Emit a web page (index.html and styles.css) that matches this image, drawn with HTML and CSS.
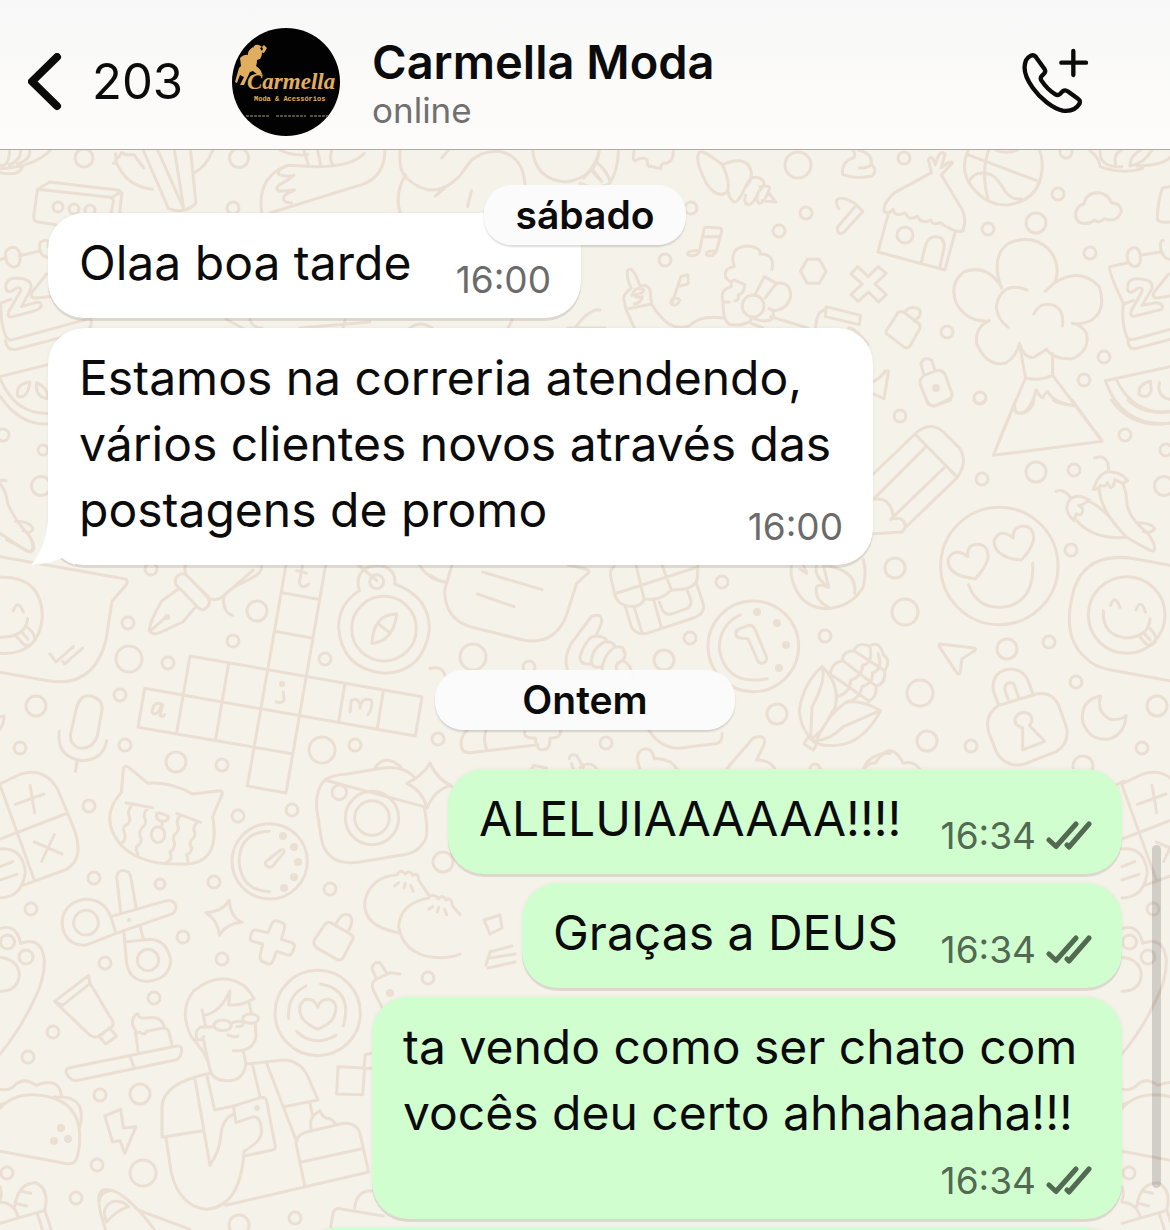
FILE: index.html
```html
<!DOCTYPE html>
<html lang="pt-BR">
<head>
<meta charset="utf-8">
<meta name="viewport" content="width=device-width, initial-scale=1">
<title>Carmella Moda</title>
<link rel="stylesheet" href="styles.css">
</head>
<body>
<div class="app">
  <header class="topbar">
    <button class="back" type="button" aria-label="Voltar">
      <svg width="34" height="58" viewBox="0 0 34 58" aria-hidden="true"><path d="M29 4 4 28.500 29 53" fill="none" stroke="currentColor" stroke-width="8" stroke-linecap="round" stroke-linejoin="round"/></svg>
      <span>203</span>
    </button>
    <svg class="avatar" viewBox="0 0 108 108" role="img" aria-label="Carmella Moda">
      <circle cx="54" cy="54" r="54" fill="#020202"/>
      <g fill="#e0ae5f">
        <path d="M21 20q1-4 6-3l3 2 2-2 3 3-3 5-3-1 2-3-1-2-2 1q4 5 0 11l-3 1q0 4-1 6 5 3 6 8l-4 1-5-4-3 1q-3 6-6 13l-4 0 4-8-4-2-3 8-2-1 4-14 2-2-1-8q4-4 8-3-1-4 5-8z"/>
        <text class="logo-name" x="15" y="61">Carmella</text>
        <text class="logo-sub" x="22" y="73">Moda &amp; Acessórios</text>
      </g>
      <path d="M14 88h24M44 88h30M78 88h18" stroke="#574d42" stroke-width="2" stroke-dasharray="3 1"/>
    </svg>
    <div class="who">
      <h1>Carmella Moda</h1>
      <p>online</p>
    </div>
    <button class="call" type="button" aria-label="Adicionar chamada">
      <svg width="68" height="68" viewBox="-1 9 204 204" fill="none" stroke="currentColor" stroke-width="13" stroke-linecap="round" stroke-linejoin="round" aria-hidden="true"><path d="M156 18V90M120 53H194M42 34C34 26 20 34 14 46C4 70 12 98 34 128C58 162 94 190 124 197C146 200 164 194 175 175C177 169 176 165 171 162L139 139C134 135 128 136 124 139L116 147C112 151 107 151 102 148C86 138 71 123 60 106C57 101 58 97 61 93L68 86C73 81 73 77 69 71L42 34Z"/></svg>
    </button>
  </header>

  <main class="chat">
    <svg class="wallpaper" viewBox="0 150 1170 1080" preserveAspectRatio="xMinYMin slice" aria-hidden="true">
      <defs>
        <!-- doodles that repeat on both edges -->
        <g id="edge">
          <path d="M0 132L62 102Q135 80 174 150L222 266Q256 360 195 390L68 436M0 297L196 222M0 135L102 418M90 136 104 218M46 193 132 162M103 306 186 342M163 284 125 364M0 327Q66 320 76 395 68 472 0 474M0 380 38 365M0 420 50 403" transform="translate(0 740) scale(.33333)"/>
          <path d="M0 566Q50 550 62 610 125 588 133 660 134 720 102 780 60 870 0 942M0 652Q54 658 58 704 54 754 0 754" transform="translate(0 740) scale(.33333)"/>
          <circle cx="7.500" cy="942" r="7"/><circle cx="26" cy="957" r="7"/>
          <path d="M0 388Q30 392 42 378 70 348 108 376 176 350 184 404M0 445Q40 400 112 405 220 414 237 500 244 560 228 600 220 616 190 609L0 574M160 412Q262 400 240 500M0 435 12 430M0 790 132 752M112 762 128 810M134 750 154 810M44 740Q54 668 108 668 150 690 134 750M64 694 92 700M48 730 80 738M0 726Q44 730 54 770M0 680Q8 705 0 720" transform="translate(0 960) scale(.33333)"/>
          <circle cx="7" cy="1173" r="6"/>
        </g>
      </defs>
      <g class="ink">
        <use href="#edge"/><use href="#edge" x="1122"/>

        <!-- top left: bowl, radio, carrots, goose -->
        <g transform="translate(0 140) scale(.38265 .33333)">
          <path d="M0 86Q90 82 134 28M0 98Q48 110 58 82M24 75Q56 60 54 30M45 72Q80 60 78 30M0 76Q24 82 25 30"/>
          <path d="M98 148 130 126 306 150Q320 152 318 164L312 225M98 148 288 172Q298 174 296 186L290 222M98 148 88 230Q88 244 100 246L146 254M290 174 312 158"/>
          <path d="M374 30 440 205Q480 225 512 190L498 30M412 30 480 206M456 30 480 206M398 148Q332 140 304 68L296 70M304 68 302 42M310 52 318 38 328 44 350 44Q366 70 376 84M508 98Q540 80 556 30"/>
          <path d="M684 219Q670 110 752 76L830 80Q920 80 952 40M752 76Q720 92 730 104 752 112 768 106 752 122 728 136 718 146 730 154L770 150Q740 164 740 176 744 190 762 188M705 219 945 134Q1006 110 1006 30M732 30Q760 48 804 44M794 30 806 76M830 30 838 76M870 76Q858 52 868 30"/>
          <path d="M1046 30Q1040 90 1062 114 1132 188 1200 110L1232 60Q1262 32 1306 34 1370 50 1372 140M1060 105Q1030 160 1046 219M1154 54 1174 28M1138 168 1160 146M1232 152 1222 200M1392 30Q1400 120 1480 126 1560 110 1566 30M1545 90 1568 120"/>
          <path d="M0 360 16 352M50 348 106 332M18 330Q40 310 52 340 56 380 36 382 14 376 14 340ZM106 306Q130 290 126 320M104 312Q100 350 128 352M16 448Q10 414 46 414 92 418 78 454L56 500 92 488Q108 482 108 498 104 508 92 512L34 530Q16 534 24 512L54 452Q56 438 40 446 24 464 16 448ZM122 402 84 456Q76 474 92 474L130 470M0 490 28 478M2 490Q2 560 16 590 22 604 36 598L232 536M14 602Q18 632 42 628L228 572Q240 564 238 538"/>
          <path d="M0 710 126 674M0 716Q40 824 126 820M0 768Q52 856 126 852M78 726Q40 732 46 768 72 780 78 726ZM96 728Q90 770 124 776 128 746 96 728ZM0 1020 16 1022M0 1030Q18 1060 20 1090 30 1120 56 1160 90 1200 88 1226 84 1240 68 1232L0 1180M40 1144Q76 1144 86 1164 84 1184 60 1172"/>
        </g>
        <!-- strip between the incoming messages -->
        <path d="M226 319 246 330M250 319Q252 328 262 328M300 328 370 322M345 320 343 328M410 328Q420 320 432 328M508 328 512 320M575 328Q590 308 600 310M568 328H605"/>

        <!-- top right: shell, hut, ball, flower, mountain -->
        <g transform="translate(580 140) scale(.37628 .33333)">
          <path d="M102 30Q102 90 78 132 40 150 0 130M50 38Q44 70 10 114M48 70Q74 96 80 126M34 90 58 124M144 30Q138 64 148 62 162 50 178 58 180 84 186 78L214 86Q216 66 228 70 248 66 248 34"/>
          <path d="M378 74Q322 24 316 38 304 60 336 130 362 176 390 158 402 130 378 74ZM378 74Q440 44 454 90 460 120 440 140 420 190 410 186 396 176 394 156M440 140Q454 100 480 116 500 130 474 156 460 196 446 194 434 190 440 166M478 140Q510 134 502 150 490 190 476 190 466 184 474 156M500 156 520 186 484 182M726 30Q736 52 722 56 694 66 698 104 730 118 776 108 792 92 774 72 778 40 740 30M742 84Q770 84 774 72"/>
          <path d="M688 206Q668 170 706 176 720 184 730 190L752 214 702 276Q684 290 684 262L734 196"/>
          <path d="M934 98 926 60Q934 38 944 74 956 24 970 42L960 84Q984 60 990 68L960 106M934 98 836 158Q804 190 808 214 824 224 832 208 836 230 856 222 866 216 866 222 876 244 896 228 908 254 932 240 936 258 958 248 976 264 978 262 1002 280 1018 272 1028 240 1016 210L962 108M820 218 792 336 970 390 998 272M906 370 920 310Q932 282 960 294 972 310 966 332L956 382"/>
          <path d="M1032 30Q1004 100 1052 154 1090 200 1140 194 1220 180 1228 90 1230 50 1220 30M1030 44 1214 122M1086 30Q1064 100 1086 184M1032 126Q1050 90 1086 102 1104 104 1130 154 1150 182 1172 176M1104 30Q1130 44 1162 30"/>
          <path d="M1354 30Q1380 52 1382 80 1440 104 1494 86 1498 78 1480 78 1550 76 1568 52M1382 30Q1380 84 1440 80M1424 80Q1416 40 1440 30M1462 78Q1500 70 1520 30M1490 30Q1460 50 1462 78"/>
          <path d="M1340 192Q1344 156 1380 158 1406 164 1412 188 1440 190 1438 216 1426 250 1394 236 1376 252 1368 240 1350 256 1328 248 1308 228 1324 202 1330 194 1340 192ZM1568 140 1548 144Q1536 180 1534 238 1540 250 1568 246"/>
          <path d="M318 330 330 266Q332 260 344 262L370 264Q378 264 376 274L362 336M326 290H372M318 332Q284 330 286 344 300 352 312 342ZM362 334Q336 330 336 344 352 354 362 334ZM244 492 268 410 286 404Q290 430 286 432L266 438M262 476Q242 470 242 490 254 504 266 480"/>
          <path d="M144 562 122 508 190 492 186 448Q176 430 160 440 140 372 126 392 124 420 136 444 118 460 116 474L122 508M138 466Q146 436 170 450 170 460 144 466 152 476 166 470 162 490 144 492M190 492Q210 530 236 552 260 568 290 558 320 524 382 534M410 380Q394 320 446 318 484 324 478 342 520 342 510 388M410 380Q380 384 388 414L398 424M438 434 410 420Q400 420 402 440 370 450 380 486H396M438 434Q436 464 420 464 424 482 412 482M380 488Q380 540 396 552 420 560 452 546L456 530M464 466 490 410 522 430 492 474M522 430Q560 424 560 470 550 510 514 512L502 506M456 532Q480 548 506 540 518 530 512 510M506 530 606 564M456 550 486 564"/>
          <ellipse cx="460" cy="498" rx="29" ry="33"/>
          <path d="M604 358H636L654 394 636 430H604L586 394ZM738 380 766 410 792 380 814 400 784 432 814 464 794 486 766 456 740 484 720 464 750 432 720 402ZM654 500 746 526 742 554 652 530ZM626 562Q630 514 646 512L658 502M714 564Q730 562 766 614"/>
          <path d="M814 572 846 516Q854 512 862 518L902 552Q906 560 902 568L876 620Q870 626 862 622L818 584Q810 578 814 572ZM862 516Q880 494 902 508 912 524 888 544M908 714Q900 724 906 738L924 788Q934 800 944 798L982 776Q992 770 988 760L970 702Q960 688 948 692L914 706ZM914 704 906 672Q912 648 934 660L944 692M780 724Q798 716 812 692L820 694 808 776 780 762"/>
          <path d="M1120 444Q1090 350 1138 310 1200 280 1244 326 1280 370 1262 428L1236 454M1120 440Q1080 370 1020 396 980 430 1000 490 1030 550 1088 542M1262 428Q1330 380 1380 440 1400 510 1360 540 1330 556 1308 550M1188 450Q1120 420 1106 500 1110 540 1138 562M1206 522Q1220 486 1254 494 1288 506 1282 558M1088 542Q1050 560 1054 610 1080 680 1130 670 1160 650 1168 610 1180 656 1206 652L1240 628Q1260 660 1310 656 1356 630 1346 580 1334 554 1308 550M1168 612 1184 714Q1220 724 1256 706L1256 640M1184 714 1114 900M1256 706 1386 900M1152 796Q1150 824 1176 818 1200 806 1212 750 1230 784 1232 768L1242 754Q1260 790 1316 798"/>
          <path d="M1456 368 1408 380Q1402 390 1444 490 1438 550 1454 592 1460 602 1472 598L1568 568M1456 600Q1458 630 1476 626L1568 598M1490 346 1542 336M1458 332Q1480 310 1488 340 1494 378 1474 380 1454 376 1454 346ZM1550 302Q1540 300 1544 330 1550 356 1568 358M1456 452Q1450 414 1486 416 1530 420 1518 450L1494 496 1530 488Q1554 490 1546 508L1476 528Q1458 532 1466 510L1494 454Q1496 438 1480 446 1464 464 1456 452ZM1564 402 1526 456Q1518 474 1534 474L1568 468M1444 492 1470 482"/>
          <path d="M1568 680 1396 722Q1440 862 1568 850M1424 716Q1470 826 1568 816M1516 724Q1482 732 1486 764 1510 780 1518 750ZM1540 728Q1532 770 1568 778"/>
        </g>

        <!-- right: pencil, smileys, chillies, lock, moon -->
        <g transform="translate(860 400) scale(.33333)">
          <path d="M468 0 400 166 726 124 636 0M464 20Q464 48 498 36 520 20 522 0M200 0Q202 20 228 16L272 0M342 0Q358 22 376 0M580 0Q600 16 648 14M754 0Q816 86 930 70M804 0Q850 46 930 34"/>
          <path d="M40 222 165 102Q210 60 250 96L300 146Q324 186 292 232L135 384 126 396 40 401M165 102 292 232M196 142 40 298Q96 290 100 356 138 350 135 384M92 358 256 200"/>
          <circle cx="418" cy="498" r="176"/>
          <path d="M324 470Q318 436 350 433 386 432 384 476 374 506 346 536 262 528 264 478 284 440 324 470ZM460 414Q458 380 490 378 526 382 520 422 514 450 484 480 402 472 402 422 420 382 460 414ZM326 554Q350 624 424 622 524 612 518 490"/>
          <path d="M704 174Q746 160 746 212M700 268Q720 208 756 216 788 220 803 242L788 250 764 238Q762 264 750 262L742 248Q740 262 722 256 712 270 700 268ZM718 268Q720 330 800 412 880 460 882 452 890 440 864 400 800 350 800 300 798 270 788 250M836 368Q878 370 884 386 874 402 850 394M588 274Q612 264 632 294M688 300Q650 278 630 298 606 330 642 362L648 342Q670 350 668 326L656 316Q664 318 688 300ZM648 360Q700 420 798 412M684 302Q720 320 748 350"/>
          <path d="M930 496 824 476Q660 450 634 600 610 720 680 776 700 800 752 810L930 842"/>
          <circle cx="800" cy="645" r="115"/>
          <path d="M730 632Q726 706 798 714 868 710 870 656M752 616Q764 580 780 622M828 630Q842 592 856 636M836 706 856 730Q870 744 886 726 894 710 870 686M854 702 870 720"/>
          <path d="M238 732 344 744Q350 750 338 756L306 776 300 820Q296 826 290 818L238 740ZM416 916 400 872Q394 816 446 808 490 806 504 842L520 884M444 898 434 868Q436 842 460 850L476 892M416 916 530 882Q576 874 596 916L620 984Q628 1030 590 1054L494 1092Q440 1106 410 1058L386 996Q372 944 416 916ZM488 984Q460 974 466 954 480 930 504 940 526 956 508 976L554 1024 488 1050ZM722 888Q660 900 668 966 690 1026 750 1016 796 1000 798 946 780 962 750 958 708 936 722 888ZM10 1108Q26 1086 46 1090 90 1014 130 1090 160 1080 180 1108"/>
        </g>
        <path d="M1114 786 1124 781"/>

        <!-- left middle: speech bubble, pen, compass, crossword, mic -->
        <g transform="translate(0 540) scale(.33333)">
          <path d="M0 50 376 117Q388 122 376 138L336 184 318 300Q280 446 144 422L0 397M0 112Q124 108 127 228 120 346 0 340M0 292Q78 292 83 236M40 212Q54 174 70 216M50 290 72 314Q90 324 104 300 106 280 82 262M66 276 84 298M150 342 168 366 220 320M188 364 194 372 248 324M20 0 90 36Q100 34 98 10L94 0"/>
          <path d="M556 75Q552 96 560 106L630 176Q650 184 668 170L760 90M784 78Q790 100 736 124 670 152 670 180 672 220 698 226M534 106Q552 96 562 108L624 172Q636 196 612 208 602 212 592 200L528 134Q522 116 534 106ZM534 148 486 182Q450 240 448 272 456 286 480 278L548 246 584 204M452 272 500 230"/>
          <path d="M858 75 742 738 858 759 977 75M846 158 956 178M824 274 936 294M570 348 1266 470 1246 588 434 445 414 562 876 641M570 348 530 578M686 370 647 598M1034 434 1016 545M1150 452 1132 564"/>
          <path d="M908 75 898 128Q904 150 926 132M890 92 920 100M488 494Q460 480 456 516 470 534 486 494M488 494 480 526Q488 534 494 524M850 456 852 480Q848 490 828 486M1050 516 1054 482Q1080 470 1080 504M1080 500Q1086 470 1114 480 1120 500 1104 524"/>
          <circle cx="1152" cy="266" r="97"/><circle cx="1130" cy="125" r="21"/>
          <path d="M1078 152Q1064 100 1104 82 1120 76 1146 78 1190 90 1184 132 1290 170 1288 270 1270 396 1152 400 1024 386 1016 262 1016 190 1078 152ZM1075 75 1130 122M1190 222Q1120 222 1116 310 1180 304 1190 222ZM1136 252 1168 278M1258 75Q1290 124 1340 126"/>
          <path d="M228 508Q240 462 272 468 310 478 306 510L292 588Q276 630 236 624 208 612 212 582ZM178 574Q168 650 244 662 310 660 320 602M232 662 226 694M0 568Q14 546 12 528L0 530"/>
        </g>

        <!-- middle: bubble, gift, hand, coin, corn -->
        <g transform="translate(430 540) scale(.33333)">
          <path d="M66 75 44 150Q44 236 120 260L280 300Q370 318 408 230L440 130 476 98Q480 92 470 88L415 75M158 96 336 149M142 162 252 200M0 105Q20 122 44 126"/>
          <path d="M552 80Q538 90 542 110L554 162Q564 204 620 198 640 190 642 176 690 186 724 150 800 150 802 112L804 75M552 162 800 82M618 75 642 176M696 75 724 150M586 200 604 260Q620 286 650 280L790 234Q830 220 818 186L798 126M612 200 636 278M672 182 694 262M688 186 698 212Q710 228 730 220L770 206Q788 196 782 178L772 152"/>
          <path d="M412 390Q400 350 424 310L484 230Q520 216 514 250L498 288M498 288Q470 288 450 350 450 374 478 372M530 302Q490 320 484 360 484 388 512 380M554 320Q516 350 516 394M582 330Q590 350 578 362M498 288Q530 290 532 306 550 304 556 322 584 316 582 336M560 390Q552 374 576 362 606 370 608 418"/>
          <circle cx="970" cy="319" r="136"/>
          <path d="M930 225Q866 256 868 330 890 440 1012 416M918 284Q914 272 930 266L956 256Q968 254 974 266L1010 352Q1010 370 994 370 986 370 982 360L954 296 930 294Q920 294 918 284Z"/>
          <path d="M1084 75Q1080 110 1094 140 1120 204 1190 206 1266 200 1300 140 1310 90 1300 58M1120 75 1130 100 1110 88M1180 75 1196 142Q1170 130 1160 140 1150 180 1200 204M1180 75Q1284 90 1274 160M1160 75Q1150 110 1196 142"/>
          <path d="M1144 598Q1110 560 1108 510 1120 430 1176 380 1230 430 1216 500L1176 570 1144 598Q1160 620 1220 616 1300 610 1352 512 1300 480 1250 486 1196 520 1160 600M1176 382Q1190 420 1146 500L1142 590M1350 512 1240 560Q1200 600 1160 602M1134 592 1162 608 1150 630 1122 612Z"/>
          <path d="M1200 404Q1206 366 1238 362 1236 334 1272 332 1282 304 1318 318 1350 300 1360 344 1384 360 1364 392 1368 432 1338 438 1342 472 1314 484M1238 362 1338 438M1272 332 1364 392M1206 406 1318 484M1222 470Q1260 460 1262 420 1296 410 1298 376 1330 370 1320 320M1252 486Q1290 476 1296 440 1330 430 1328 398 1360 390 1344 340"/>
          <path d="M112 570Q90 590 94 620 98 640 120 638L324 614M168 570Q158 600 170 628M284 575Q280 596 316 594 320 636 342 628 360 630 360 594 394 596 392 570M656 570Q700 640 780 620L850 612Q880 610 876 580M418 656Q420 640 440 646L460 682M424 670 430 686M450 682Q480 660 500 686M306 686 310 676 350 684M630 686Q610 636 644 626 670 626 672 656 720 654 740 686M890 686 970 594Q1010 580 1002 614L980 660Q1020 660 1034 686M0 670Q26 720 66 740M0 385Q40 376 46 410M1300 686Q1320 640 1380 640"/>
        </g>

        <!-- left lower: cat, camera, timer, scissors, dumplings -->
        <g transform="translate(0 740) scale(.33333)">
          <path d="M364 158 370 86Q374 74 386 82L444 130Q510 124 578 162L658 152Q670 152 666 164L638 230Q664 380 540 372 420 376 360 312 296 230 364 158ZM378 188 458 203M530 220 602 247M396 194Q380 214 388 230 394 246 376 256 366 266 374 280 380 300 362 312M444 204Q426 220 436 240 440 252 424 266 414 280 424 296 424 310 410 320 406 330 414 342M540 228Q526 244 534 258 540 270 524 284 516 296 524 310 522 330 510 336 520 360 500 366M592 246Q576 262 584 276 588 290 574 300 566 314 576 324 572 340 560 344L564 364M470 220Q480 216 506 230 504 244 486 244 466 240 470 220Z"/>
          <ellipse cx="474" cy="284" rx="20" ry="24"/><path d="M486 244V256"/>
          <circle cx="809" cy="364" r="113"/>
          <path d="M808 274Q720 276 717 364 724 452 808 455M842 330Q856 326 850 340L818 378Q806 386 798 376 792 366 804 360Z"/>
          <path d="M974 120Q1000 104 1040 102L1150 84Q1210 76 1246 114M1272 200Q1290 290 1270 308 1250 340 1210 344L1080 366Q980 380 964 296L950 206Q946 150 974 120ZM1122 88Q1154 36 1204 82M1220 130Q1266 110 1290 70 1310 116 1352 136 1300 152 1282 204 1266 150 1220 130Z"/>
          <circle cx="1116" cy="234" r="80"/><circle cx="1116" cy="234" r="52"/><circle cx="1018" cy="157" r="22"/>
          <path d="M362 516 350 410Q352 390 372 392 388 392 392 410L408 500M332 530 500 482Q530 480 528 506 524 520 510 524L348 580ZM332 530Q312 476 252 478 190 490 186 548 192 616 256 616L348 580M372 580 380 670Q390 726 446 724 510 716 512 660 500 600 450 598L374 606M420 560 430 596"/>
          <circle cx="258" cy="548" r="37"/><circle cx="444" cy="660" r="32"/>
          <path d="M618 518Q670 514 688 480 690 530 726 547 680 550 658 586 654 540 618 518ZM768 570Q756 568 752 586 748 600 758 604L788 612 780 650Q780 662 790 666L806 672Q816 672 820 660L830 634 866 646Q876 644 880 630 888 614 876 608L844 598 854 564Q856 552 846 548L830 542Q818 542 814 554L804 578ZM944 598 974 554Q982 544 992 548L1054 584Q1062 590 1058 598L1030 652Q1022 664 1010 658L948 622Q938 614 944 598ZM1008 552Q1024 516 1046 524 1066 536 1044 576"/>
          <path d="M1196 578Q1090 560 1094 486 1110 410 1192 404 1200 384 1216 402 1230 388 1238 406 1256 396 1256 420 1270 440 1286 466M1286 474Q1200 490 1196 560 1210 640 1300 652 1350 656 1380 642M1286 474Q1296 456 1316 476 1330 462 1338 480 1356 470 1356 496L1380 524M1184 438 1196 428M1212 444 1216 430M1240 454 1232 436M1286 508 1298 500M1312 516 1316 502M1340 524 1334 508"/>
        </g>
        <g transform="translate(0 960) scale(.33333)">
          <path d="M164 124 266 46 270 70 188 136ZM164 124 270 226Q284 236 296 228L336 200Q342 190 336 180L270 70M298 230 328 204 350 228 318 252ZM414 274 406 210Q388 190 406 164L414 162Q414 176 440 174 486 166 494 204M406 224Q416 212 424 220 436 224 440 214L490 204Q506 206 508 220L516 256M206 324 530 258Q548 256 544 274 544 294 526 300L228 362Q206 360 198 336 198 326 206 324ZM390 290 402 322"/>
          <path d="M626 308Q610 270 574 230 534 150 582 92 660 30 730 76 750 92 762 116 720 140 686 134L690 92Q660 160 610 166M606 150 618 202M610 238 630 330Q640 362 680 362 730 364 738 312L730 272M640 200 600 202Q584 214 590 236 600 246 612 230M748 130 754 160M766 190 768 230Q760 276 700 272M684 224Q700 234 714 228M692 190Q716 180 728 186 734 200 710 200"/>
          <ellipse cx="668" cy="196" rx="26" ry="16"/><ellipse cx="752" cy="176" rx="24" ry="14"/>
          <path d="M630 340Q480 370 486 450L486 532 608 512M498 534 514 640Q540 740 620 748 720 740 732 580M584 352 630 616Q660 570 662 530 664 480 700 462M620 344 644 450 700 438M738 312 850 300Q900 300 924 350L954 420 852 440M758 316 780 410M800 310 888 540M700 438 784 412Q798 412 800 424L826 560Q828 568 818 570L732 588M700 438 708 488 760 470Q784 472 784 510 790 540 732 574M678 736 1106 636M914 676 888 550Q890 520 930 514L1030 490Q1070 488 1080 520L1106 636M904 606 1086 566M930 430 938 466M934 510Q926 480 944 464L960 452Q968 476 990 476 1000 482 1006 490M1116 324 1092 326 1096 284 1116 280M1014 320 1094 324 1088 404 1010 402ZM1064 744Q1070 690 1116 692M992 800 1000 756Q1006 744 1020 746L1150 768"/>
          <circle cx="953" cy="159" r="128"/>
          <path d="M953 142Q944 114 916 118 886 140 908 176 924 196 953 208 990 192 1000 174 1020 130 988 118 962 116 953 142ZM918 78Q860 106 866 176M962 72Q1060 90 1030 198M890 214Q940 264 1008 226"/>
          <path d="M314 468 362 448 370 504 408 500 374 580 360 542 338 546ZM316 808Q280 700 310 690 350 684 400 736 440 776 462 808M320 786Q300 740 340 724 370 722 386 740 350 750 320 786ZM414 750 570 808M298 724Q300 696 330 692M1200 42 1170 38 1124 60Q1112 72 1120 90L1146 142M1128 54 1116 26Q1120 4 1140 8L1162 42"/>
        </g>
        <path d="M484 920 500 915 502 928 490 934ZM486 965 490 952 512 946M490 958 515 954M488 968 515 962"/>

        <!-- loose rings -->
        <g><circle cx="239" cy="158" r="9.500"/><circle cx="84" cy="158" r="9"/><circle cx="233" cy="208" r="6"/><circle cx="58" cy="207" r="5"/><circle cx="74" cy="209" r="5"/><circle cx="90" cy="210" r="5"/><circle cx="3" cy="435" r="6"/><circle cx="43" cy="450" r="5"/><circle cx="41" cy="486" r="9.500"/><circle cx="798" cy="165" r="13"/><circle cx="904" cy="158" r="6"/><circle cx="1066" cy="152" r="6"/><circle cx="1058" cy="194" r="6"/><circle cx="1036" cy="223" r="10"/><circle cx="988" cy="229" r="6"/><circle cx="905" cy="235" r="8"/><circle cx="806" cy="213" r="6"/><circle cx="779" cy="231" r="6"/><circle cx="691" cy="208" r="6"/><circle cx="665" cy="260" r="6"/><circle cx="1090" cy="253" r="6"/><circle cx="947" cy="332" r="6"/><circle cx="1104" cy="357" r="6"/><circle cx="1084" cy="380" r="6"/><circle cx="980" cy="398" r="6"/><circle cx="900" cy="416" r="6"/><circle cx="1125" cy="435" r="6"/><circle cx="1166" cy="450" r="6"/><circle cx="1164" cy="486" r="9.500"/><circle cx="1036" cy="472" r="10"/><circle cx="1074" cy="470" r="6"/><circle cx="982" cy="479" r="6"/><circle cx="1071" cy="550" r="6"/><circle cx="895" cy="568" r="10"/><circle cx="905" cy="612" r="13"/><circle cx="1007" cy="649" r="10"/><circle cx="1049" cy="642" r="6"/><circle cx="920" cy="693" r="13"/><circle cx="1076" cy="682" r="6"/><circle cx="1157" cy="706" r="10"/><circle cx="1142" cy="748" r="6"/><circle cx="927" cy="741" r="10"/><circle cx="971" cy="746" r="6"/><circle cx="1083" cy="766" r="10"/></g>
        <g><circle cx="151" cy="569" r="6"/><circle cx="128" cy="623" r="6"/><circle cx="257" cy="611" r="10"/><circle cx="233" cy="641" r="6"/><circle cx="129" cy="659" r="13"/><circle cx="168" cy="663" r="6"/><circle cx="325" cy="659" r="6"/><circle cx="120" cy="695" r="6"/><circle cx="36" cy="706" r="10"/><circle cx="20" cy="748" r="6"/><circle cx="125" cy="745" r="6"/><circle cx="176" cy="762" r="10"/><circle cx="222" cy="765" r="6"/><circle cx="322" cy="750" r="13"/><circle cx="355" cy="745" r="6"/><circle cx="438" cy="739" r="6"/><circle cx="89" cy="806" r="6"/><circle cx="238" cy="816" r="6"/><circle cx="292" cy="810" r="6"/><circle cx="443" cy="862" r="10"/><circle cx="94" cy="878" r="6"/><circle cx="160" cy="884" r="5"/><circle cx="214" cy="882" r="6"/><circle cx="330" cy="889" r="6"/><circle cx="31" cy="909" r="6"/><circle cx="183" cy="937" r="6"/><circle cx="105" cy="963" r="6"/><circle cx="222" cy="959" r="6"/><circle cx="428" cy="978" r="6"/><circle cx="154" cy="998" r="6"/><circle cx="53" cy="1032" r="6"/><circle cx="28" cy="1057" r="6"/><circle cx="100" cy="1095" r="6"/><circle cx="140" cy="1094" r="10"/><circle cx="97" cy="1165" r="6"/><circle cx="143" cy="1173" r="13"/><circle cx="76" cy="1198" r="6"/><circle cx="239" cy="1225" r="10"/><circle cx="295" cy="1218" r="6"/><circle cx="722" cy="582" r="6"/><circle cx="690" cy="638" r="6"/><circle cx="664" cy="660" r="10"/><circle cx="825" cy="636" r="6"/><circle cx="473" cy="657" r="13"/><circle cx="529" cy="667" r="6"/><circle cx="777" cy="714" r="10"/><circle cx="606" cy="743" r="6"/><circle cx="1153" cy="909" r="6"/><circle cx="815" cy="769" r="5"/></g>
        <g class="dots"><circle cx="936" cy="388" r="4"/><circle cx="757" cy="612" r="4"/><circle cx="777" cy="623" r="4"/><circle cx="786" cy="645" r="4"/><circle cx="779" cy="668" r="4"/><circle cx="283" cy="836" r="4"/><circle cx="294" cy="847" r="4"/><circle cx="298" cy="862" r="4"/><circle cx="294" cy="877" r="4"/><circle cx="284" cy="888" r="4"/><circle cx="390" cy="993" r="4"/><circle cx="61" cy="1128" r="4"/><circle cx="54" cy="1141" r="4"/><circle cx="68" cy="1139" r="4"/><circle cx="257" cy="1108" r="3"/><circle cx="282" cy="684" r="3"/><circle cx="167" cy="617" r="3"/><circle cx="129" cy="920" r="2"/></g>
      </g>
    </svg>

    <svg width="0" height="0" class="defs" aria-hidden="true"><defs><path id="ticks" d="M3 19 10 25.500 30 3M21 24 23 26 43 3"/></defs></svg>

    <div class="day">sábado</div>
    <div class="msg in first"><p>Olaa boa tarde</p><div class="meta"><time>16:00</time></div></div>
    <div class="msg in long">
      <p>Estamos na correria atendendo, vários clientes novos através das postagens de promo</p>
      <div class="meta"><time>16:00</time></div>
      <svg class="tail" width="44" height="52" viewBox="0 0 44 52" aria-hidden="true"><path d="M17 0V8Q15 34 0 52 17 51 31 45 36 49 44 52V0Z" fill="#fff"/></svg>
    </div>

    <div class="day wide">Ontem</div>
    <div class="msg out w1"><p>ALELUIAAAAAA!!!!</p><div class="meta"><time>16:34</time><svg class="ticks" width="46" height="30" viewBox="0 0 46 30" role="img" aria-label="Entregue"><use href="#ticks"/></svg></div></div>
    <div class="msg out w2"><p>Graças a DEUS</p><div class="meta"><time>16:34</time><svg class="ticks" width="46" height="30" viewBox="0 0 46 30" role="img" aria-label="Entregue"><use href="#ticks"/></svg></div></div>
    <div class="msg out w3"><p>ta vendo como ser chato com vocês deu certo ahhahaaha!!!</p><div class="meta"><time>16:34</time><svg class="ticks" width="46" height="30" viewBox="0 0 46 30" role="img" aria-label="Entregue"><use href="#ticks"/></svg></div></div>
    <div class="msg out next"></div>
    <div class="scrollbar"></div>
  </main>
</div>
</body>
</html>
```
FILE: styles.css
```css
* { box-sizing: border-box; }
body {
  margin: 0;
  font-family: Inter, "Liberation Sans", sans-serif;
  color: #0b0b0b;
}
h1, p { margin: 0; }
button { padding: 0; border: 0; background: none; font: inherit; color: inherit; }

.app { display: flex; flex-direction: column; height: 100vh; overflow: hidden; }

.topbar {
  display: flex;
  align-items: center;
  flex: none;
  height: 150px;
  padding: 14px 81px 0 28px;
  border-bottom: 1px solid #aeaba6;
  background: linear-gradient(#f8f8f8, #fdfcfa);
}
.back { display: flex; align-items: center; gap: 30px; width: 204px; font-size: 49px; line-height: 60px; }
.avatar { flex: none; width: 108px; height: 108px; }
.logo-name { font: italic bold 23px "Liberation Serif", serif; }
.logo-sub { font: bold 7px "Liberation Mono", monospace; }
.who { flex: 1; padding-left: 32px; }
.who h1 { font-size: 47px; line-height: 56px; font-weight: 600; }
.who p { font-size: 35px; line-height: 40px; color: #707070; }
.call { display: flex; }

.chat {
  position: relative;
  display: flex;
  flex-direction: column;
  flex: 1;
  padding: 35px 48px 0;
  overflow: hidden;
  background: #f5f2ea;
}
.wallpaper { position: absolute; top: 0; left: 0; width: 100%; height: 100%; }
.ink { fill: none; stroke: #eadfd2; stroke-width: 3px; stroke-linecap: round; stroke-linejoin: round; }
.ink path, .ink circle, .ink ellipse { vector-effect: non-scaling-stroke; }
#edge path, #edge circle { vector-effect: non-scaling-stroke; }
.dots { fill: #eadfd2; stroke: none; }
.defs { position: absolute; }

.day {
  position: relative;
  z-index: 2;
  align-self: center;
  min-width: 200px;
  padding: 0 31px;
  border-radius: 28px;
  background: rgba(251, 251, 251, .96);
  box-shadow: 0 2px 2px rgba(0, 0, 0, .14);
  font-size: 39px;
  line-height: 60px;
  font-weight: 600;
  text-align: center;
}
.wide { min-width: 300px; margin: 105px 0 39px; }

.msg {
  position: relative;
  display: flex;
  flex: none;
  justify-content: space-between;
  align-items: flex-end;
  padding: 17px 30px 16px 31px;
  border-radius: 36px;
  box-shadow: 0 3px 0 rgba(90, 80, 70, .14), 0 0 4px rgba(0, 0, 0, .05);
}
.msg p { padding-bottom: 6px; font-size: 48px; line-height: 66px; }
.meta { display: flex; align-items: center; gap: 10px; color: #6b6b6b; font-size: 37px; line-height: 44px; }
.in { align-self: flex-start; background: #fff; }
.out { align-self: flex-end; margin-bottom: 9px; background: #d0fecf; }
.out .meta { color: #536a52; }

.first { width: 533px; margin: -32px 0 10px; }
.long { display: grid; width: 825px; }
.long p, .long .meta { grid-area: 1 / 1; }
.long .meta { justify-self: end; align-self: end; }
.tail { position: absolute; left: -17px; bottom: 0; }
.w1 { width: 674px; }
.w2 { width: 600px; }
.w3 { flex-direction: column; gap: 7px; width: 750px; }
.next { width: 822px; height: 105px; }

.ticks { fill: none; stroke: currentColor; stroke-width: 5px; stroke-linecap: round; stroke-linejoin: round; }

.scrollbar {
  position: absolute;
  right: 9px;
  bottom: 42px;
  width: 9px;
  height: 343px;
  border-radius: 5px;
  background: rgba(0, 0, 0, .15);
}
```
